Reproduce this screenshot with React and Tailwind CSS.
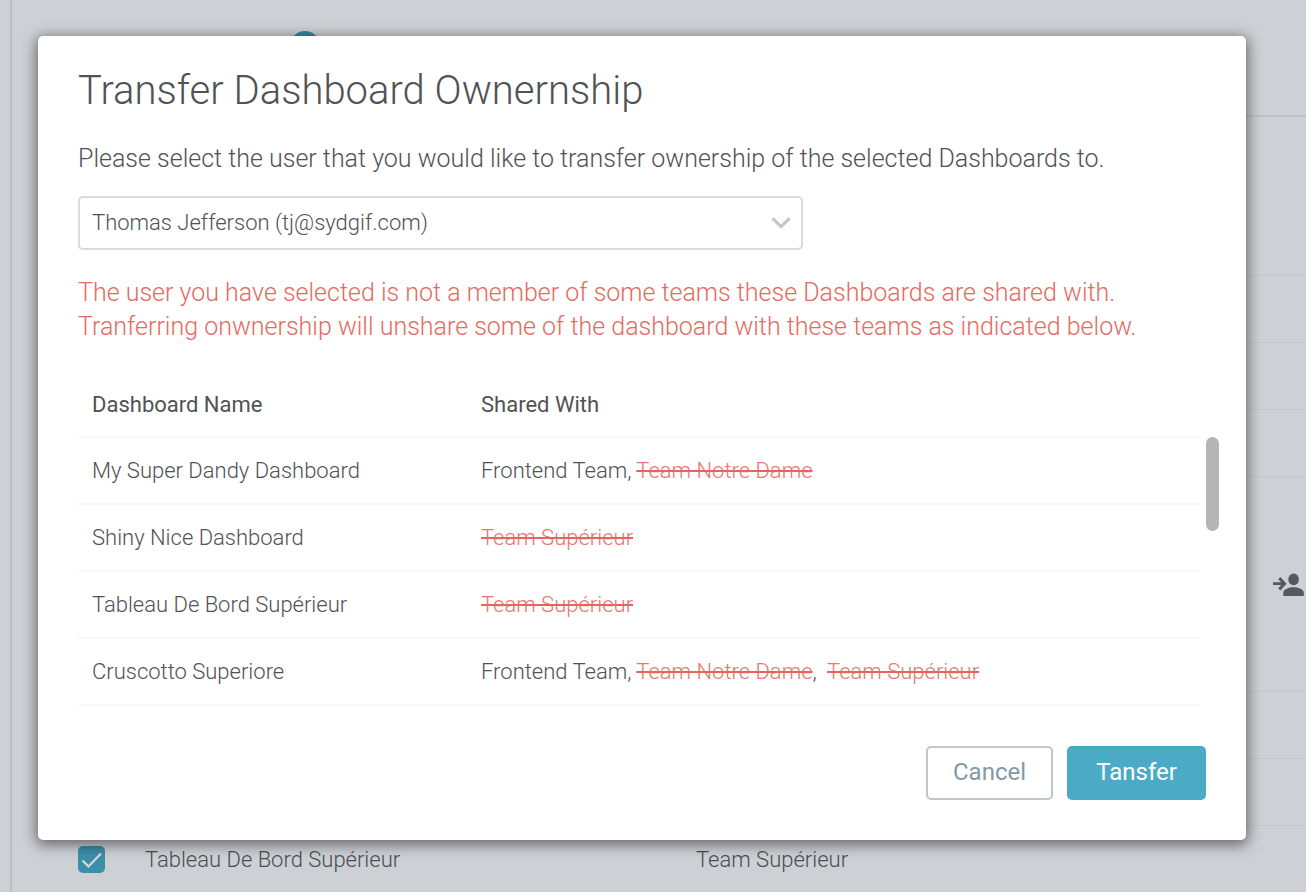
const sharedDashboards = [
  { name: "My Super Dandy Dashboard", teams: [["Frontend Team", true], ["Team Notre Dame", false]] },
  { name: "Shiny Nice Dashboard", teams: [["Team Supérieur", false]] },
  { name: "Tableau De Bord Supérieur", teams: [["Team Supérieur", false]] },
  { name: "Cruscotto Superiore", teams: [["Frontend Team", true], ["Team Notre Dame", false], ["Team Supérieur", false]] },
];

function TransferIcon() {
  return (
    <svg viewBox="0 0 31 24" className="h-6 w-[31px] fill-[#55595e]" aria-hidden="true">
      <path d="M0 9.3h8.2L5.2 6.2 7.3 4l6.3 6.7-6.3 6.7-2.1-2.2 3-3.1H0z" />
      <ellipse cx="20.6" cy="6.4" rx="5.3" ry="5.9" />
      <path d="M10.3 23v-3.2c0-3.8 5.8-5.6 10.3-5.6s10.2 1.8 10.2 5.6V23z" />
    </svg>
  );
}

function BackgroundPage() {
  return (
    <main className="ml-[10px] min-h-screen border-l-2 border-[#bcc0c5] pl-[66px]">
      <header className="flex h-[117px] border-b-2 border-[#bfc3c8] pl-[212px] pt-[31px]">
        <span className="size-[30px] rounded-full bg-[#3a8ca5]" />
      </header>
      <div className="h-[159px] border-b border-[#c3c6cb]" />
      <div className="h-[67px] border-b border-[#c3c6cb]" />
      <div className="h-[67px] border-b border-[#c3c6cb]" />
      <div className="h-[67px] border-b border-[#c3c6cb]" />
      <div className="flex h-[215px] items-center justify-end border-b border-[#c3c6cb] pr-[2px] pt-[2px]">
        <button type="button" aria-label="Transfer ownership">
          <TransferIcon />
        </button>
      </div>
      <div className="h-[67px] border-b border-[#c3c6cb]" />
      <div className="h-[67px] border-b border-[#c3c6cb]" />
      <div className="flex h-[67px] items-center text-[22px] font-light text-[#4b4e52]">
        <label className="flex w-[618px] items-center gap-10">
          <span className="relative size-[27px]">
            <input type="checkbox" defaultChecked className="block size-[27px] appearance-none rounded-[5px] bg-[#3d8fa9]" />
            <svg viewBox="0 0 27 27" className="pointer-events-none absolute inset-0 size-[27px]" aria-hidden="true">
              <path d="M4.5 14.5l6 6L23 7.5" fill="none" stroke="#d5dadf" strokeWidth="2.2" />
            </svg>
          </span>
          Tableau De Bord Supérieur
        </label>
        <span>Team Supérieur</span>
      </div>
    </main>
  );
}

function TeamList({ teams }) {
  return teams.map(([team, kept], index) => (
    <span key={team}>
      {index > 0 && (index > 1 ? <>,&nbsp; </> : ", ")}
      {kept ? team : <s className="text-[#e8786e] decoration-[#e2665b] decoration-2">{team}</s>}
    </span>
  ));
}

export default function App() {
  return (
    <div className="relative h-screen overflow-hidden bg-[#cdd0d5] font-[Roboto,sans-serif]">
      <BackgroundPage />
      <div className="absolute inset-0 pb-[52px] pl-[38px] pr-[60px] pt-9">
        <section
          role="dialog"
          aria-labelledby="dialog-title"
          className="rounded-[5px] bg-white px-10 pb-10 pt-8 font-light text-[#505254] shadow-[0_3px_14px_2px_rgba(0,0,0,0.5)]"
        >
          <h1 id="dialog-title" className="text-[40px] leading-[46px]">Transfer Dashboard Ownernship</h1>
          <label htmlFor="new-owner" className="mt-7 block text-[25px] leading-[34px]">
            Please select the user that you would like to transfer ownership of the selected Dashboards to.
          </label>
          <div className="relative mt-5 w-[725px] max-w-full">
            <select
              id="new-owner"
              className="block h-[54px] w-full appearance-none rounded-[5px] border-2 border-[#d5dde3] bg-white pb-[2px] pl-3 pr-12 text-[22px] font-light"
            >
              <option>Thomas Jefferson (tj@sydgif.com)</option>
            </select>
            <svg viewBox="0 0 20 14" className="pointer-events-none absolute right-3 top-5 h-[14px] w-5" aria-hidden="true">
              <path d="M1.5 2.3L10 10.6l8.5-8.3" fill="none" stroke="#bcc7cf" strokeWidth="3.2" />
            </svg>
          </div>
          <p className="mt-[26px] text-[25px] leading-[34px] text-[#e46b61]">
            The user you have selected is not a member of some teams these Dashboards are shared with.
            <br />
            Tranferring onwnership will unshare some of the dashboard with these teams as indicated below.
          </p>
          <div className="-mr-[13px] mt-[29px] flex gap-[6px]">
            <table className="flex-1 table-fixed border-collapse text-left text-[22px]">
              <thead>
                <tr className="h-16 border-b-2 border-[#f6f7f7]">
                  <th className="w-[389px] pl-[14px] font-normal">Dashboard Name</th>
                  <th className="pl-[14px] font-normal">Shared With</th>
                </tr>
              </thead>
              <tbody>
                {sharedDashboards.map(({ name, teams }) => (
                  <tr key={name} className="h-[67px] border-b-2 border-[#f6f7f7]">
                    <td className="pl-[14px]">{name}</td>
                    <td className="pl-[14px]"><TeamList teams={teams} /></td>
                  </tr>
                ))}
              </tbody>
            </table>
            <div className="mt-16 h-[94px] w-[13px] rounded-full bg-[#b5b5b5]" />
          </div>
          <div className="mt-10 flex justify-end gap-[14px] text-[24px] font-normal">
            <button type="button" className="h-[54px] w-[127px] rounded-[5px] border-2 border-[#bcc7cf] pb-[2px] text-[#8499a5]">Cancel</button>
            <button type="button" className="h-[54px] w-[139px] rounded-[5px] bg-[#4babc6] pb-[2px] text-white">Tansfer</button>
          </div>
        </section>
      </div>
    </div>
  );
}
